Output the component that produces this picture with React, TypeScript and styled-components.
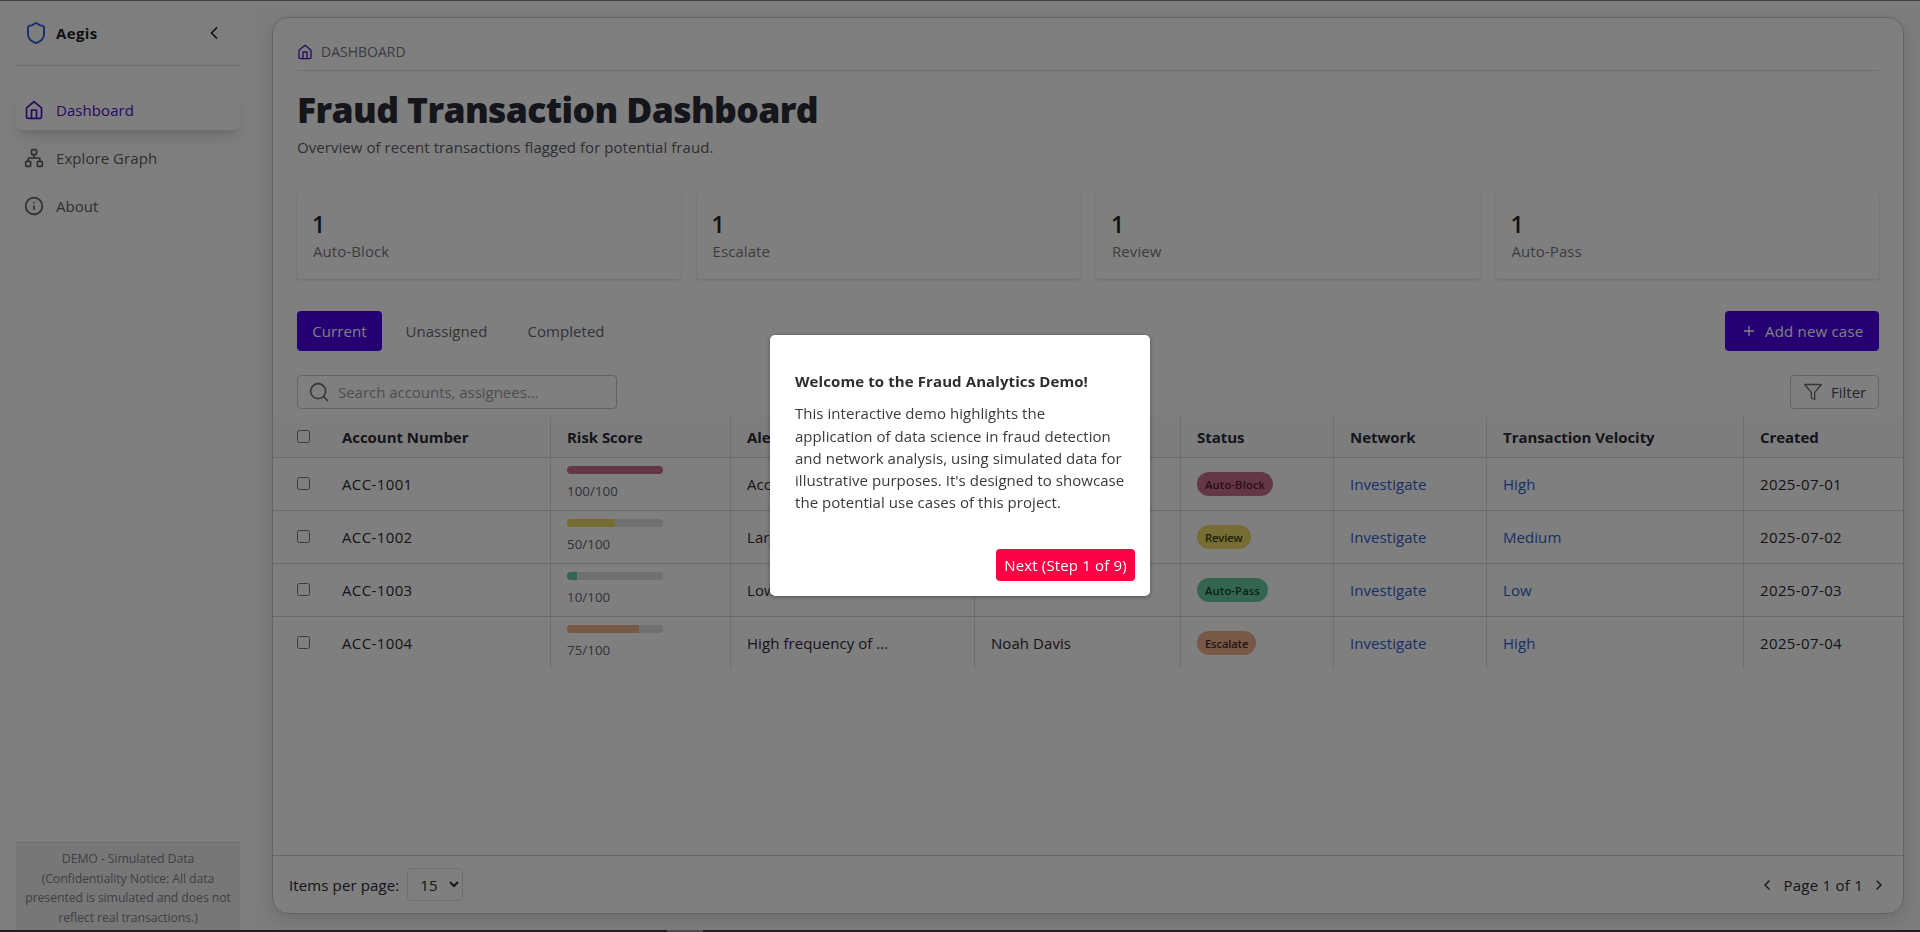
import React from 'react';
import styled, { createGlobalStyle, css } from 'styled-components';

const Global = createGlobalStyle`
  * { box-sizing: border-box; }
  html, body { margin: 0; height: 100%; background: #fdfdfe; }
  #root { height: 100vh; overflow: hidden; }
  body, button, input, select { font-family: "Open Sans", "Noto Sans", sans-serif; font-size: 15px; line-height: 24px; color: #2a2a35; }
  button { border: 0; background: none; padding: 0; }
  h1, p { margin: 0; }
`;

const Page = styled.div`
  display: flex;
  height: 930px;
  border-top: 1px solid #858585;
  overflow: hidden;
`;

const BottomEdge = styled.div`
  height: 2px;
  display: flex;
  padding-left: 667px;
  background: #3c3a42;
`;

const EdgeHandle = styled.div`
  width: 36px;
  background: #9a989c;
`;

const Sidebar = styled.aside`
  width: 256px;
  padding: 0 16px;
  display: flex;
  flex-direction: column;
  background: #fdfdfd;
`;

const Brand = styled.div`
  height: 65px;
  display: flex;
  align-items: center;
  padding: 0 16px 0 8px;
  border-bottom: 1px solid #dbdcdf;
  font-weight: 700;
  color: #1c1c22;
  gap: 8px;
`;

const BrandName = styled.span`
  flex: 1;
  letter-spacing: 0.35px;
`;

const Nav = styled.nav`
  display: flex;
  flex-direction: column;
  gap: 8px;
  padding-top: 24px;
  flex: 1;
`;

const NavItem = styled.a<{ $active?: boolean }>`
  height: 40px;
  display: flex;
  align-items: center;
  gap: 12px;
  padding: 0 8px;
  border-radius: 6px;
  letter-spacing: 0.06px;
  color: ${p => (p.$active ? '#4a10c8' : '#5c5d63')};
  ${p => p.$active && css`background: #fefefe; box-shadow: 0 10px 15px -3px rgba(0,0,0,.12), 0 4px 6px -4px rgba(0,0,0,.14);`}
`;

const Notice = styled.p`
  height: 88px;
  padding: 6px 0 0;
  border-top: 1px solid #d5d6d9;
  background: #efeff0;
  color: #7f8087;
  text-align: center;
  font-size: 12.3px;
  line-height: 19.5px;
  white-space: nowrap;
  letter-spacing: -0.1px;
`;

const Main = styled.main`
  flex: 1;
  min-width: 0;
  padding: 16px;
  background: #fbfbfc;
`;

const Panel = styled.section`
  height: 897px;
  display: flex;
  flex-direction: column;
  background: #ffffff;
  border: 1px solid #c8c9cd;
  border-radius: 16px;
  box-shadow: 0 6px 18px rgba(0,0,0,.14);
  overflow: hidden;
`;

const Head = styled.header`
  padding: 0 24px;
`;

const Crumb = styled.div`
  height: 53px;
  display: flex;
  align-items: center;
  gap: 8px;
  padding-top: 16px;
  border-bottom: 1px solid #dcdde0;
  font-size: 14px;
  letter-spacing: 0;
  color: #74767e;
`;

const Title = styled.h1`
  margin-top: 16px;
  font-size: 35.5px;
  line-height: 44px;
  font-weight: 800;
  letter-spacing: -0.62px;
  color: #2a2a38;
`;

const Subtitle = styled.p`
  margin-top: 4px;
  color: #5c5d65;
  letter-spacing: 0.06px;
`;

const Cards = styled.div`
  display: grid;
  grid-template-columns: repeat(4, 1fr);
  gap: 16px;
  margin-top: 32px;
`;

const Card = styled.div`
  height: 88px;
  padding: 19px 15px 0;
  border-radius: 4px;
  background: #ffffff;
  box-shadow: 0 1px 3px rgba(0,0,0,.16);
`;

const Count = styled.div`
  font-size: 23px;
  line-height: 28px;
  font-weight: 600;
  color: #24242c;
`;

const CardLabel = styled.div`
  margin: 1px 0 0 1px;
  color: #787a82;
  letter-spacing: 0.08px;
`;

const Bar = styled.div`
  display: flex;
  align-items: center;
  justify-content: space-between;
`;

const TabBar = styled(Bar)`
  margin-top: 32px;
`;

const Tabs = styled.div`
  display: flex;
  gap: 8px;
`;

const Tab = styled.button<{ $active?: boolean; $w: number }>`
  width: ${p => p.$w}px;
  height: 40px;
  border-radius: 4px;
  letter-spacing: 0.06px;
  color: ${p => (p.$active ? '#ffffff' : '#64666e')};
  background: ${p => (p.$active ? '#4a00e8' : 'transparent')};
`;

const AddButton = styled.button`
  width: 154px;
  height: 40px;
  display: flex;
  align-items: center;
  padding-left: 16px;
  gap: 8px;
  border-radius: 4px;
  background: #4a00e8;
  color: #ffffff;
  white-space: nowrap;
  letter-spacing: 0.2px;
`;

const SearchBar = styled(Bar)`
  margin-top: 24px;
`;

const SearchBox = styled.label`
  width: 320px;
  height: 34px;
  display: flex;
  align-items: center;
  gap: 9px;
  padding: 0 11px;
  border: 1px solid #c6c8ce;
  border-radius: 4px;
  color: #6a6c74;
`;

const SearchInput = styled.input`
  flex: 1;
  min-width: 0;
  border: 0;
  padding: 0;
  background: none;
  outline: 0;
  letter-spacing: -0.03px;
  &::placeholder { color: #999ba2; }
`;

const FilterButton = styled.button`
  width: 89px;
  height: 34px;
  display: flex;
  align-items: center;
  gap: 8px;
  padding-left: 12px;
  border: 1px solid #c6c8ce;
  border-radius: 4px;
  color: #4c4e56;
`;

const Table = styled.div`
  flex: 1;
  margin-top: 8px;
`;

const Row = styled.div<{ $head?: boolean; $last?: boolean }>`
  display: grid;
  grid-template-columns: 278px 180px 244px 206px 153px 153px 257px 1fr;
  height: ${p => (p.$head ? 41 : p.$last ? 52 : 53)}px;
  background: ${p => (p.$head ? '#fbfbfc' : '#ffffff')};
  font-weight: ${p => (p.$head ? 700 : 400)};
  letter-spacing: ${p => (p.$head ? -0.05 : 0.06)}px;
  border-bottom: ${p => (p.$last ? 0 : '1px solid #d4d5d9')};
`;

const Cell = styled.div<{ $link?: boolean; $code?: boolean }>`
  display: flex;
  align-items: center;
  padding-left: 16px;
  border-right: 1px solid #dedfe3;
  white-space: nowrap;
  letter-spacing: ${p => (p.$code ? '0.38px' : 'inherit')};
  color: ${p => (p.$link ? '#2f5fd0' : 'inherit')};
  &:first-child { padding-left: 24px; }
  &:last-child { border-right: 0; }
`;

const Check = styled.input.attrs({ type: 'checkbox' })`
  width: 13px;
  height: 13px;
  margin: 0 32px 2px 0;
`;

const Score = styled.div`
  display: flex;
  flex-direction: column;
  gap: 7px;
  font-size: 13.3px;
  line-height: 20px;
  color: #62646c;
  padding-bottom: 2px;
`;

const Track = styled.div`
  width: 96px;
  height: 8px;
  border-radius: 4px;
  overflow: hidden;
  background: #dfe1e4;
`;

const Fill = styled.div`
  height: 100%;
`;

const Badge = styled.span<{ $bg: string; $fg: string; $wide: boolean }>`
  height: 24px;
  padding: 1px 8px 0;
  border-radius: 12px;
  font-size: 11.2px;
  line-height: 23px;
  font-weight: 600;
  letter-spacing: ${p => (p.$wide ? 0.15 : -0.12)}px;
  background: ${p => p.$bg};
  color: ${p => p.$fg};
`;

const Footer = styled.footer`
  height: 58px;
  display: flex;
  align-items: center;
  justify-content: space-between;
  padding: 0 16px;
  border-top: 1px solid #d0d1d5;
`;

const PageSize = styled.div`
  display: flex;
  align-items: center;
  gap: 8px;
  letter-spacing: 0.12px;
`;

const Select = styled.select`
  width: 56px;
  height: 33px;
  padding: 0 4px 0 8px;
  border: 1px solid #dcdee2;
  border-radius: 4px;
  background: transparent;
`;

const Pager = styled.div`
  display: flex;
  align-items: center;
  gap: 8px;
  letter-spacing: 0.25px;
`;

const Overlay = styled.div`
  position: fixed;
  inset: 0;
  display: flex;
  align-items: flex-start;
  justify-content: center;
  padding-top: 335px;
  background: rgba(0, 0, 0, 0.5);
`;

const Dialog = styled.div`
  width: 380px;
  height: 261px;
  padding: 15px;
  display: flex;
  flex-direction: column;
  background: #ffffff;
  border-radius: 5px;
  color: #3a3a3a;
  box-shadow: 0 1px 4px rgba(0, 0, 0, 0.35);
`;

const DialogBody = styled.div`
  flex: 1;
  padding: 20px 10px 0;
  line-height: 22.3px;
  white-space: nowrap;
  letter-spacing: 0.04px;
`;

const DialogTitle = styled.p`
  font-weight: 700;
  margin-bottom: 10px;
  letter-spacing: 0.1px;
  color: #2e2e2e;
`;

const NextButton = styled.button`
  align-self: flex-end;
  width: 139px;
  height: 32px;
  border-radius: 4px;
  background: #ff0044;
  color: #ffffff;
  white-space: nowrap;
  letter-spacing: 0.16px;
`;

const Icon = ({ size = 20, color = 'currentColor', w = 2, children }: { size?: number; color?: string; w?: number; children: React.ReactNode }) => (
  <svg width={size} height={size} viewBox="0 0 24 24" fill="none" stroke={color} strokeWidth={w} strokeLinecap="round" strokeLinejoin="round">{children}</svg>
);

const HomeIcon = ({ size = 20 }: { size?: number }) => (
  <Icon size={size} color="#4a10c8">
    <path d="M3 9.500 12 2l9 7.500V20a2 2 0 0 1-2 2H5a2 2 0 0 1-2-2z" />
    <path d="M9 22V12h6v10" />
  </Icon>
);

const PINK = '#c96f8c', YELLOW = '#eadb68', GREEN = '#69cba3', ORANGE = '#f0b08c';

const rows = [
  { id: 'ACC-1001', score: 100, alert: 'Access', who: '', status: 'Auto-Block', bg: PINK, fg: '#4d1a2e', velocity: 'High', date: '2025-07-01' },
  { id: 'ACC-1002', score: 50, alert: 'Large', who: '', status: 'Review', bg: YELLOW, fg: '#3f3a14', velocity: 'Medium', date: '2025-07-02' },
  { id: 'ACC-1003', score: 10, alert: 'Low', who: '', status: 'Auto-Pass', bg: GREEN, fg: '#173d2f', velocity: 'Low', date: '2025-07-03' },
  { id: 'ACC-1004', score: 75, alert: 'High frequency of ...', who: 'Noah Davis', status: 'Escalate', bg: ORANGE, fg: '#4a2c1c', velocity: 'High', date: '2025-07-04' },
];

export default function App() {
  return (
    <>
      <Global />
      <Page>
        <Sidebar>
          <Brand>
            <Icon size={24} color="#3563d8"><path d="M20 13c0 5-3.500 7.500-7.660 8.950a1 1 0 0 1-.67-.010C7.500 20.500 4 18 4 13V6a1 1 0 0 1 1-1c2 0 4.500-1.200 6.240-2.720a1.170 1.170 0 0 1 1.520 0C14.510 3.810 17 5 19 5a1 1 0 0 1 1 1z" /></Icon>
            <BrandName>Aegis</BrandName>
            <Icon><path d="m15 18-6-6 6-6" /></Icon>
          </Brand>
          <Nav>
            <NavItem $active><HomeIcon />Dashboard</NavItem>
            <NavItem>
              <Icon><rect x="16" y="16" width="6" height="6" rx="1" /><rect x="2" y="16" width="6" height="6" rx="1" /><rect x="9" y="2" width="6" height="6" rx="1" /><path d="M5 16v-3a1 1 0 0 1 1-1h12a1 1 0 0 1 1 1v3M12 12V8" /></Icon>
              Explore Graph
            </NavItem>
            <NavItem><Icon><circle cx="12" cy="12" r="10" /><path d="M12 16v-4M12 8h.01" /></Icon>About</NavItem>
          </Nav>
          <Notice>DEMO - Simulated Data<br />(Confidentiality Notice: All data<br />presented is simulated and does not<br />reflect real transactions.)</Notice>
        </Sidebar>
        <Main>
          <Panel>
            <Head>
              <Crumb><HomeIcon size={16} />DASHBOARD</Crumb>
              <Title>Fraud Transaction Dashboard</Title>
              <Subtitle>Overview of recent transactions flagged for potential fraud.</Subtitle>
              <Cards>
                {['Auto-Block', 'Escalate', 'Review', 'Auto-Pass'].map(label => (
                  <Card key={label}><Count>1</Count><CardLabel>{label}</CardLabel></Card>
                ))}
              </Cards>
              <TabBar>
                <Tabs>
                  <Tab $active $w={85}>Current</Tab>
                  <Tab $w={113}>Unassigned</Tab>
                  <Tab $w={110}>Completed</Tab>
                </Tabs>
                <AddButton><Icon size={16}><path d="M5 12h14M12 5v14" /></Icon>Add new case</AddButton>
              </TabBar>
              <SearchBar>
                <SearchBox>
                  <Icon><circle cx="11" cy="11" r="9" /><path d="m22 22-4.600-4.600" /></Icon>
                  <SearchInput placeholder="Search accounts, assignees..." />
                </SearchBox>
                <FilterButton><Icon w={1.6} color="#6a6c74"><path d="M22 3H2l8 9.460V19l4 2v-8.540z" /></Icon>Filter</FilterButton>
              </SearchBar>
            </Head>
            <Table>
              <Row $head>
                <Cell><Check />Account Number</Cell>
                <Cell>Risk Score</Cell><Cell>Alert</Cell><Cell /><Cell>Status</Cell>
                <Cell>Network</Cell><Cell>Transaction Velocity</Cell><Cell>Created</Cell>
              </Row>
              {rows.map((r, i) => (
                <Row key={r.id} $last={i === rows.length - 1}>
                  <Cell $code><Check />{r.id}</Cell>
                  <Cell><Score><Track><Fill style={{ width: `${r.score}%`, background: r.bg }} /></Track>{r.score}/100</Score></Cell>
                  <Cell>{r.alert}</Cell>
                  <Cell>{r.who}</Cell>
                  <Cell><Badge $bg={r.bg} $fg={r.fg} $wide={r.status.includes('-')}>{r.status}</Badge></Cell>
                  <Cell $link>Investigate</Cell>
                  <Cell $link>{r.velocity}</Cell>
                  <Cell $code>{r.date}</Cell>
                </Row>
              ))}
            </Table>
            <Footer>
              <PageSize>Items per page:<Select defaultValue="15"><option>15</option></Select></PageSize>
              <Pager>
                <Icon size={16}><path d="m15 18-6-6 6-6" /></Icon>Page 1 of 1<Icon size={16}><path d="m9 18 6-6-6-6" /></Icon>
              </Pager>
            </Footer>
          </Panel>
        </Main>
      </Page>
      <BottomEdge><EdgeHandle /></BottomEdge>
      <Overlay>
        <Dialog>
          <DialogBody>
            <DialogTitle>Welcome to the Fraud Analytics Demo!</DialogTitle>
            <p>This interactive demo highlights the<br />application of data science in fraud detection<br />and network analysis, using simulated data for<br />illustrative purposes. It's designed to showcase<br />the potential use cases of this project.</p>
          </DialogBody>
          <NextButton>Next (Step 1 of 9)</NextButton>
        </Dialog>
      </Overlay>
    </>
  );
}
